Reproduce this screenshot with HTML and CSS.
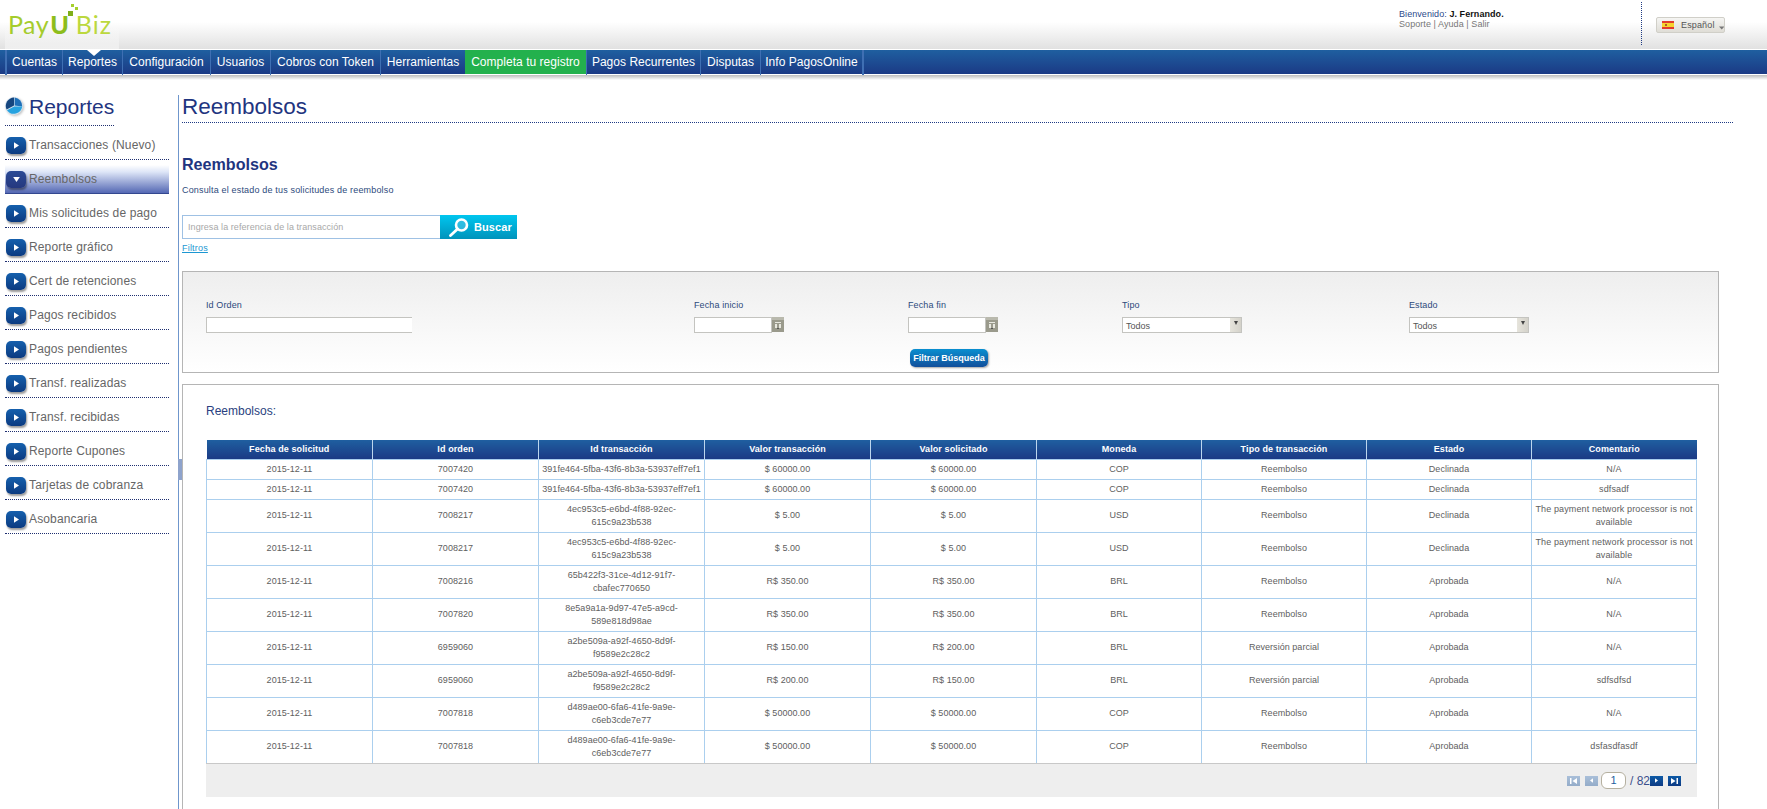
FILE: index.html
```html
<!DOCTYPE html>
<html lang="es">
<head>
<meta charset="utf-8">
<title>PayU Biz - Reembolsos</title>
<link rel="stylesheet" href="styles.css">
</head>
<body>
<header class="header">
  <div class="logo">
    <span class="logo-pay">Pay</span><span class="logo-u">U</span><span class="logo-biz">Biz</span>
    <svg class="logo-dots" width="14" height="12" viewBox="0 0 14 12"><rect x="0" y="7" width="5" height="5" fill="#7faf1a"/><rect x="3" y="0" width="3" height="3" fill="#a5cf2d"/><rect x="7" y="3" width="3" height="3" fill="#a5cf2d"/></svg>
  </div>
  <div class="user">
    <div>Bienvenido: <b>J. Fernando.</b></div>
    <div class="user-links">Soporte | Ayuda | Salir</div>
  </div>
  <div class="lang">
    <svg class="flag" width="12" height="8" viewBox="0 0 12 8"><rect width="12" height="8" fill="#e23b2e"/><rect y="2" width="12" height="4" fill="#f6d32d"/><rect x="3" y="3" width="2" height="2" fill="#b5562a"/></svg>
    <span>Español</span>
    <svg class="lang-arrow" width="7" height="4" viewBox="0 0 7 4"><path d="M0 0h7L3.5 4z" fill="#777"/></svg>
  </div>
</header>

<nav class="nav">
  <a class="nav-item">Cuentas</a>
  <a class="nav-item current">Reportes</a>
  <a class="nav-item">Configuración</a>
  <a class="nav-item">Usuarios</a>
  <a class="nav-item">Cobros con Token</a>
  <a class="nav-item">Herramientas</a>
  <a class="nav-item green">Completa tu registro</a>
  <a class="nav-item">Pagos Recurrentes</a>
  <a class="nav-item">Disputas</a>
  <a class="nav-item last">Info PagosOnline</a>
</nav>
<div class="nav-shadow"></div>

<div class="main">
  <aside class="sidebar">
    <div class="side-title">
      <svg class="pie" width="18" height="18" viewBox="0 0 18 18"><circle cx="9" cy="9" r="9" fill="#d5e3ef"/><path d="M9 8.500V.6A8.400 8.400 0 0 0 1.600 12.600z" fill="#16467f"/><path d="M9.600 8.600V.6A8.400 8.400 0 0 1 17.200 9.600z" fill="#1e6fb8"/><path d="M2 13.200L9.200 9.600h8a8.400 8.400 0 0 1-15.200 3.600z" fill="#27a3e0"/></svg>
      <span>Reportes</span>
    </div>
    <a class="side-item"><span class="bullet"><svg width="5" height="7" viewBox="0 0 6 8"><path d="M0 0l6 4-6 4z" fill="#fff"/></svg></span>Transacciones (Nuevo)</a>
    <a class="side-item active"><span class="bullet"><svg width="7" height="5" viewBox="0 0 8 6"><path d="M0 0h8L4 6z" fill="#fff"/></svg></span>Reembolsos</a>
    <a class="side-item"><span class="bullet"><svg width="5" height="7" viewBox="0 0 6 8"><path d="M0 0l6 4-6 4z" fill="#fff"/></svg></span>Mis solicitudes de pago</a>
    <a class="side-item"><span class="bullet"><svg width="5" height="7" viewBox="0 0 6 8"><path d="M0 0l6 4-6 4z" fill="#fff"/></svg></span>Reporte gráfico</a>
    <a class="side-item"><span class="bullet"><svg width="5" height="7" viewBox="0 0 6 8"><path d="M0 0l6 4-6 4z" fill="#fff"/></svg></span>Cert de retenciones</a>
    <a class="side-item"><span class="bullet"><svg width="5" height="7" viewBox="0 0 6 8"><path d="M0 0l6 4-6 4z" fill="#fff"/></svg></span>Pagos recibidos</a>
    <a class="side-item"><span class="bullet"><svg width="5" height="7" viewBox="0 0 6 8"><path d="M0 0l6 4-6 4z" fill="#fff"/></svg></span>Pagos pendientes</a>
    <a class="side-item"><span class="bullet"><svg width="5" height="7" viewBox="0 0 6 8"><path d="M0 0l6 4-6 4z" fill="#fff"/></svg></span>Transf. realizadas</a>
    <a class="side-item"><span class="bullet"><svg width="5" height="7" viewBox="0 0 6 8"><path d="M0 0l6 4-6 4z" fill="#fff"/></svg></span>Transf. recibidas</a>
    <a class="side-item"><span class="bullet"><svg width="5" height="7" viewBox="0 0 6 8"><path d="M0 0l6 4-6 4z" fill="#fff"/></svg></span>Reporte Cupones</a>
    <a class="side-item"><span class="bullet"><svg width="5" height="7" viewBox="0 0 6 8"><path d="M0 0l6 4-6 4z" fill="#fff"/></svg></span>Tarjetas de cobranza</a>
    <a class="side-item"><span class="bullet"><svg width="5" height="7" viewBox="0 0 6 8"><path d="M0 0l6 4-6 4z" fill="#fff"/></svg></span>Asobancaria</a>
  </aside>

  <main class="content">
    <div class="handle"></div>
    <h1 class="page-title">Reembolsos</h1>
    <h2 class="section-title">Reembolsos</h2>
    <p class="section-sub">Consulta el estado de tus solicitudes de reembolso</p>
    <div class="search">
      <input class="search-input" type="text" placeholder="Ingresa la referencia de la transacción">
      <button class="search-btn" type="button">
        <svg width="20" height="19" viewBox="0 0 20 19"><circle cx="12.500" cy="7" r="5.500" fill="#5ec6e6" fill-opacity=".5" stroke="#fff" stroke-width="2.600"/><path d="M8.500 11L1.500 17.500" stroke="#fff" stroke-width="2.800" stroke-linecap="round"/></svg>
        Buscar
      </button>
    </div>
    <a class="filters-link">Filtros</a>

    <section class="filter-panel">
      <div class="field">
        <label>Id Orden</label>
        <input class="input wide" type="text">
      </div>
      <div class="field">
        <label>Fecha inicio</label>
        <div class="date">
          <input class="input" type="text">
          <span class="cal"><svg width="12" height="15" viewBox="0 0 12 15"><rect width="12" height="15" fill="#9a9a8c"/><rect y="0" width="12" height="3" fill="#b9b9ad"/><path d="M3 5h6v1H3zM3 7h2v4H3zM7 7h2v4H7z" fill="#e8e8e0"/><path d="M5 11h2v1H5z" fill="#555"/></svg></span>
        </div>
      </div>
      <div class="field">
        <label>Fecha fin</label>
        <div class="date">
          <input class="input" type="text">
          <span class="cal"><svg width="12" height="15" viewBox="0 0 12 15"><rect width="12" height="15" fill="#9a9a8c"/><rect y="0" width="12" height="3" fill="#b9b9ad"/><path d="M3 5h6v1H3zM3 7h2v4H3zM7 7h2v4H7z" fill="#e8e8e0"/><path d="M5 11h2v1H5z" fill="#555"/></svg></span>
        </div>
      </div>
      <div class="field">
        <label>Tipo</label>
        <div class="select"><span>Todos</span></div>
      </div>
      <div class="field">
        <label>Estado</label>
        <div class="select"><span>Todos</span></div>
      </div>
      <div class="filter-action">
        <button class="filter-btn" type="button">Filtrar Búsqueda</button>
      </div>
    </section>

    <section class="results-panel">
      <h3 class="results-title">Reembolsos:</h3>
      <table class="grid">
        <thead>
          <tr><th>Fecha de solicitud</th><th>Id orden</th><th>Id transacción</th><th>Valor transacción</th><th>Valor solicitado</th><th>Moneda</th><th>Tipo de transacción</th><th>Estado</th><th>Comentario</th></tr>
        </thead>
        <tbody>
          <tr><td>2015-12-11</td><td>7007420</td><td>391fe464-5fba-43f6-8b3a-53937eff7ef1</td><td>$ 60000.00</td><td>$ 60000.00</td><td>COP</td><td>Reembolso</td><td>Declinada</td><td>N/A</td></tr>
          <tr><td>2015-12-11</td><td>7007420</td><td>391fe464-5fba-43f6-8b3a-53937eff7ef1</td><td>$ 60000.00</td><td>$ 60000.00</td><td>COP</td><td>Reembolso</td><td>Declinada</td><td>sdfsadf</td></tr>
          <tr><td>2015-12-11</td><td>7008217</td><td>4ec953c5-e6bd-4f88-92ec-<br>615c9a23b538</td><td>$ 5.00</td><td>$ 5.00</td><td>USD</td><td>Reembolso</td><td>Declinada</td><td>The payment network processor is not available</td></tr>
          <tr><td>2015-12-11</td><td>7008217</td><td>4ec953c5-e6bd-4f88-92ec-<br>615c9a23b538</td><td>$ 5.00</td><td>$ 5.00</td><td>USD</td><td>Reembolso</td><td>Declinada</td><td>The payment network processor is not available</td></tr>
          <tr><td>2015-12-11</td><td>7008216</td><td>65b422f3-31ce-4d12-91f7-<br>cbafec770650</td><td>R$ 350.00</td><td>R$ 350.00</td><td>BRL</td><td>Reembolso</td><td>Aprobada</td><td>N/A</td></tr>
          <tr><td>2015-12-11</td><td>7007820</td><td>8e5a9a1a-9d97-47e5-a9cd-<br>589e818d98ae</td><td>R$ 350.00</td><td>R$ 350.00</td><td>BRL</td><td>Reembolso</td><td>Aprobada</td><td>N/A</td></tr>
          <tr><td>2015-12-11</td><td>6959060</td><td>a2be509a-a92f-4650-8d9f-<br>f9589e2c28c2</td><td>R$ 150.00</td><td>R$ 200.00</td><td>BRL</td><td>Reversión parcial</td><td>Aprobada</td><td>N/A</td></tr>
          <tr><td>2015-12-11</td><td>6959060</td><td>a2be509a-a92f-4650-8d9f-<br>f9589e2c28c2</td><td>R$ 200.00</td><td>R$ 150.00</td><td>BRL</td><td>Reversión parcial</td><td>Aprobada</td><td>sdfsdfsd</td></tr>
          <tr><td>2015-12-11</td><td>7007818</td><td>d489ae00-6fa6-41fe-9a9e-<br>c6eb3cde7e77</td><td>$ 50000.00</td><td>$ 50000.00</td><td>COP</td><td>Reembolso</td><td>Aprobada</td><td>N/A</td></tr>
          <tr><td>2015-12-11</td><td>7007818</td><td>d489ae00-6fa6-41fe-9a9e-<br>c6eb3cde7e77</td><td>$ 50000.00</td><td>$ 50000.00</td><td>COP</td><td>Reembolso</td><td>Aprobada</td><td>dsfasdfasdf</td></tr>
        </tbody>
      </table>
      <div class="pager">
        <span class="pg pg-off"><svg width="7" height="6" viewBox="0 0 7 6"><path d="M0 0h1.500v6H0zM7 0v6L2.500 3z" fill="#fff"/></svg></span>
        <span class="pg pg-off pg-gap"><svg width="3" height="5" viewBox="0 0 4 6"><path d="M4 0v6L0 3z" fill="#fff"/></svg></span>
        <span class="pg-input">1</span>
        <span class="pg-total">/ 82</span>
        <span class="pg"><svg width="3" height="5" viewBox="0 0 4 6"><path d="M0 0v6l4-3z" fill="#fff"/></svg></span>
        <span class="pg pg-gap"><svg width="7" height="6" viewBox="0 0 7 6"><path d="M0 0v6l4.500-3zM5.500 0H7v6H5.500z" fill="#fff"/></svg></span>
      </div>
    </section>
  </main>
</div>
</body>
</html>
```

FILE: styles.css
```css
* { box-sizing: border-box; }
html, body { margin: 0; padding: 0; }
body {
  min-height: 100vh;
  display: flex;
  flex-direction: column;
  font-family: "Liberation Sans", Arial, sans-serif;
  color: #666;
  background: #fff;
}
a { text-decoration: none; color: inherit; }

/* Header */
.header {
  height: 49px;
  flex: none;
  display: flex;
  align-items: flex-start;
  background: linear-gradient(#fff 0, #fff 22px, #e1e1e1 49px);
}
.logo {
  position: relative;
  width: 114px;
  margin-left: 5px;
  height: 49px;
  padding: 9px 0 0 3px;
  display: flex;
  font-family: Lato, "Liberation Sans", sans-serif;
  font-size: 25px;
  line-height: 30px;
  background: linear-gradient(rgba(255,255,255,0) 50%, rgba(255,255,255,.45));
}
.logo-pay { color: #a5cc2c; font-weight: 400; letter-spacing: .5px; }
.logo-u { color: #8dbd1c; font-weight: 900; margin-left: 1px; }
.logo-biz { color: #bcd83e; font-weight: 400; letter-spacing: 1px; margin-left: 7px; }
.logo-dots { position: absolute; left: 63px; top: 4px; }

.user {
  margin-left: auto;
  width: 243px;
  height: 43px;
  margin-top: 2px;
  padding-top: 7px;
  font-size: 9px;
  line-height: 10px;
  letter-spacing: .07px;
  color: #2d4a8c;
  border-right: 1px dotted #1e3a84;
}
.user b { color: #111; }
.user-links { color: #777; }
.lang {
  margin: 17px 42px 0 14px;
  width: 69px;
  height: 16px;
  display: flex;
  align-items: center;
  padding-left: 5px;
  font-size: 9px;
  color: #555;
  letter-spacing: .15px;
  border: 1px solid #d0cfc8;
  border-radius: 2px;
  background: linear-gradient(#f5f5f3, #dfddd6);
}
.flag { margin-right: 7px; flex: none; }
.lang-arrow { margin: 6px 0 0 4px; }

/* Nav */
.nav {
  height: 24px;
  flex: none;
  margin-top: 1px;
  padding-left: 5px;
  display: grid;
  grid-template-columns: 57px 60px 88px 60px 110px 85px 121px 114px 60px 104px;
  background: linear-gradient(#1f5fa0, #1b3a85);
}
.nav-item {
  position: relative;
  height: 25px;
  color: #fff;
  font-size: 12px;
  line-height: 24px;
  letter-spacing: .03px;
  text-align: center;
  border-left: 1px solid #3f6fb3;
}
.nav-item:first-child { border-left-width: 2px; }
.nav-item.last { border-right: 2px solid #3f6fb3; }
.nav-item.green {
  height: 24px;
  background: #23b14d;
  border-left: 0;
}
.nav-item.current::before {
  content: "";
  position: absolute;
  left: 24px;
  top: 0;
  border-style: solid;
  border-width: 6px 7px 0;
  border-color: #fff transparent transparent;
}
.nav-shadow {
  height: 5px;
  flex: none;
  margin-top: 1px;
  background: linear-gradient(#bcbcbc, #fff);
}

/* Layout */
.main {
  flex: 1;
  display: flex;
  padding-top: 15px;
}
.sidebar {
  width: 178px;
  flex: none;
  padding-left: 5px;
}
.side-title {
  width: 109px;
  height: 31px;
  display: flex;
  align-items: flex-start;
  font-size: 21px;
  line-height: 24px;
  color: #1f3580;
  border-bottom: 1px dotted #1e2f70;
}
.pie { margin: 2px 6px 0 0; flex: none; filter: drop-shadow(1px 1px 1px rgba(0,0,0,.25)); }
.side-item {
  width: 164px;
  height: 34px;
  display: flex;
  align-items: center;
  padding: 5px 0 0 1px;
  font-size: 12px;
  letter-spacing: .14px;
  color: #666;
  border-bottom: 1px dotted #1e2f70;
}
.side-item.active {
  background: linear-gradient(#fff, #dde5f7 25%, #5468b4) left bottom / 100% 28px no-repeat;
  border-bottom: 1px solid #33478f;
}
.bullet {
  width: 20px;
  height: 17px;
  flex: none;
  margin-right: 3px;
  display: flex;
  align-items: center;
  justify-content: center;
  border-radius: 5px;
  background: linear-gradient(#1560ad, #0b3a80);
  box-shadow: 1px 2px 2px rgba(0,0,0,.4);
}
.active .bullet { background: linear-gradient(#2b4a95, #25387f); }

.content {
  position: relative;
  flex: 1;
  display: flex;
  flex-direction: column;
  padding: 0 34px 0 3px;
  border-left: 1px solid #6f96cc;
}
.handle {
  position: absolute;
  left: -1px;
  top: 364px;
  width: 4px;
  height: 21px;
  background: #8ea3cc;
}
.page-title {
  margin: 0;
  height: 28px;
  font-size: 22.500px;
  font-weight: 400;
  line-height: 23px;
  color: #1f3580;
  border-bottom: 1px dotted #1e3a84;
}
.section-title {
  margin: 32px 0 0;
  font-size: 16.100px;
  line-height: 19px;
  font-weight: 700;
  color: #1f3580;
}
.section-sub {
  margin: 10px 0 0;
  font-size: 9px;
  line-height: 12px;
  letter-spacing: .17px;
  color: #2d4a7c;
}
.search {
  display: flex;
  margin-top: 19px;
  height: 24px;
  width: 335px;
}
.search-input {
  width: 258px;
  height: 24px;
  padding: 0 5px;
  font: 9px "Liberation Sans", sans-serif;
  letter-spacing: .07px;
  border: 1px solid #9fc1e4;
  border-right: 0;
  outline: 0;
}
.search-input::placeholder { color: #a8a8a8; opacity: 1; }
.search-btn {
  width: 77px;
  height: 24px;
  display: flex;
  align-items: center;
  gap: 5px;
  padding: 0 0 0 9px;
  border: 0;
  color: #fff;
  font: 700 11px "Liberation Sans", sans-serif;
  letter-spacing: .1px;
  background: linear-gradient(#00c6ef, #0093bb);
}
.filters-link {
  align-self: flex-start;
  margin-top: 4px;
  font-size: 9px;
  line-height: 11px;
  color: #1c97d2;
  letter-spacing: .2px;
  text-decoration: underline;
}
.filter-panel {
  width: 1537px;
  height: 102px;
  margin-top: 17px;
  padding: 27px 0 0 23px;
  display: grid;
  grid-template-columns: 488px 214px 214px 287px auto;
  grid-template-rows: 50px auto;
  border: 1px solid #b5b5b5;
  background: linear-gradient(#eee, #fff);
}
.field label {
  display: block;
  font-size: 9px;
  line-height: 12px;
  color: #2d4a7c;
  letter-spacing: .12px;
  margin-bottom: 6px;
}
.input {
  display: block;
  height: 16px;
  width: 78px;
  padding: 0 2px;
  background: #fff;
  border: 1px solid #c4c4c0;
  outline: 0;
}
.input.wide { width: 206px; border-right: 0; }
.date { display: flex; }
.cal { display: block; width: 12px; height: 15px; }
.cal svg { display: block; }
.select {
  position: relative;
  width: 120px;
  height: 16px;
  padding-left: 3px;
  font-size: 9px;
  line-height: 16px;
  color: #555;
  border: 1px solid #c4c4c0;
  background: linear-gradient(90deg, #fff 107px, #e6e4dc 107px, #d4d2ca);
}
.select::after {
  content: "";
  position: absolute;
  right: 3px;
  top: 3px;
  border-style: solid;
  border-width: 4px 2.500px 0;
  border-color: #444 transparent transparent;
}
.filter-action {
  grid-column: 3;
  grid-row: 2;
  padding-left: 2px;
}
.filter-btn {
  display: block;
  width: 78px;
  height: 18px;
  padding: 0;
  border: 0;
  border-radius: 5px;
  color: #fff;
  font: 700 9px "Liberation Sans", sans-serif;
  background: linear-gradient(#0a8fd0, #124f9b);
  box-shadow: 1px 1px 2px rgba(0,0,0,.35);
}
.results-panel {
  flex: 1;
  width: 1537px;
  margin-top: 11px;
  padding: 0 0 12px 23px;
  border: 1px solid #b5b5b5;
  border-bottom: 0;
}
.results-title {
  margin: 19px 0 21px;
  font-size: 12px;
  font-weight: 400;
  line-height: 15px;
  color: #2a3f80;
}
.grid {
  width: 1491px;
  table-layout: fixed;
  border-collapse: collapse;
  font-size: 9px;
  line-height: 13px;
  text-align: center;
}
.grid th {
  height: 19px;
  padding: 0;
  color: #fff;
  font-weight: 700;
  letter-spacing: .1px;
  border: 1px solid #bcd6ee;
  border-top: 0;
  border-bottom: 0;
  background: linear-gradient(#1f5fa0, #1b3a85);
}
.grid th:nth-child(-n+5) { width: 166px; }
.grid th:first-child { border-left: 0; }
.grid th:last-child { border-right: 0; }
.grid td {
  padding: 3px 1px;
  letter-spacing: .04px;
  color: #606060;
  border: 1px solid #abcfee;
}
.grid td:last-child { padding: 3px 2px; letter-spacing: .13px; }
.pager {
  width: 1491px;
  height: 34px;
  margin-top: -1px;
  position: relative;
  display: flex;
  align-items: center;
  justify-content: flex-end;
  padding: 1px 16px 0 0;
  background: #eee;
  border-top: 1px solid #c8c8c8;
}
.pg {
  width: 13px;
  height: 10px;
  display: flex;
  align-items: center;
  justify-content: center;
  background: linear-gradient(#0d5aa6, #0e3b84);
}
.pg-off { background: linear-gradient(#a9bfd9, #94acc9); }
.pg-gap { margin-left: 5px; }
.pg-input {
  width: 25px;
  height: 17px;
  margin-left: 3px;
  font-size: 11px;
  line-height: 15px;
  text-align: center;
  color: #1f5fa0;
  background: #fff;
  border: 1px solid #b5b0a0;
  border-radius: 6px;
}
.pg-total {
  width: 20px;
  margin-left: 4px;
  font-size: 12px;
  color: #3b4f8c;
  white-space: nowrap;
}
```
